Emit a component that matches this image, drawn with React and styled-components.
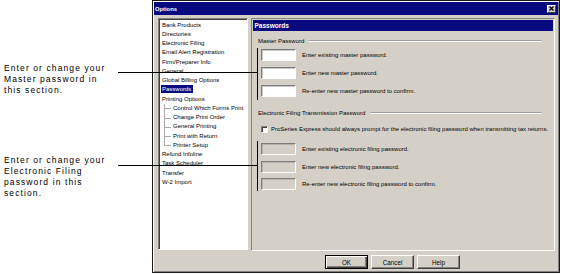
import React from "react";
import styled, { createGlobalStyle, css } from "styled-components";

const Global = createGlobalStyle`
  html, body { margin: 0; padding: 0; background: #fff; }
  body { overflow: hidden; }
  * { box-sizing: border-box; }
`;

const NAVY = "#0a0a80";
const FACE = "#d4d0c8";

const Page = styled.div`
  position: relative;
  width: 577px;
  height: 275px;
  display: flex;
  font-family: "Liberation Sans", Arial, sans-serif;
  color: #000;
`;

const NoteColumn = styled.div`
  width: 152px;
  flex: none;
  display: flex;
  flex-direction: column;
  padding-left: 4px;
`;

const Note = styled.p`
  margin: ${(p) => p.$top}px 0 0 0;
  font-size: 8.5px;
  line-height: 10.8px;
  letter-spacing: 1.1px;
  white-space: nowrap;
`;

const Leader = styled.div`
  position: absolute;
  left: 118px;
  top: ${(p) => p.$top}px;
  width: 140px;
  height: 1px;
  background: #000;
`;

const Bracket = styled.div`
  position: absolute;
  left: 257px;
  top: ${(p) => p.$top}px;
  width: 1px;
  height: ${(p) => p.$height}px;
  background: #000;
`;

const Dialog = styled.div`
  width: 408px;
  height: 273px;
  flex: none;
  border: 1px solid #1a1a1a;
  background: ${FACE};
  box-shadow: inset 1px 1px 0 #fff, inset -1px -1px 0 #808080;
  padding: 1px;
  display: flex;
  flex-direction: column;
`;

const TitleBar = styled.div`
  height: 13px;
  flex: none;
  background: ${NAVY};
  display: flex;
  align-items: center;
  justify-content: space-between;
  padding: 0 2px 0 1px;
  color: #fff;
  font-weight: bold;
  font-size: 5.8px;
`;

const CloseButton = styled.div`
  width: 9px;
  height: 8px;
  background: ${FACE};
  border: 1px solid;
  border-color: #fff #404040 #404040 #fff;
  display: flex;
  align-items: center;
  justify-content: center;
`;

const Body = styled.div`
  display: flex;
  gap: 3px;
  margin-top: 3px;
  padding-left: 4px;
`;

const Tree = styled.ul`
  list-style: none;
  margin: 0;
  width: 90px;
  height: 232px;
  flex: none;
  background: #fff;
  border: 1px solid;
  border-color: #808080 #fff #fff #808080;
  box-shadow: inset 1px 1px 0 #404040;
  padding: 1.5px 0 0 1px;
  font-size: 6px;
  line-height: 9.25px;
`;

const TreeItem = styled.li`
  position: relative;
  padding-left: ${(p) => (p.$child ? 13 : 2)}px;
  white-space: nowrap;
  ${(p) =>
    p.$child &&
    css`
      &::before {
        content: "";
        position: absolute;
        left: 3.5px;
        top: 0;
        height: ${p.$last ? "50%" : "100%"};
        border-left: 1px solid #a8a8a8;
      }
      &::after {
        content: "";
        position: absolute;
        left: 3.5px;
        top: 50%;
        width: 7px;
        border-top: 1px solid #a8a8a8;
      }
    `}
`;

const TreeLabel = styled.span`
  padding: 0.8px 1.5px;
  margin-left: -1.5px;
  ${(p) =>
    p.$selected &&
    css`
      background: ${NAVY};
      color: #fff;
    `}
`;

const Pane = styled.div`
  width: 304px;
  height: 233px;
  flex: none;
  border: 1px solid;
  border-color: #808080 #fff #fff #808080;
  padding: 1px;
  display: flex;
  flex-direction: column;
  font-size: 6px;
`;

const PaneHeader = styled.div`
  height: 11px;
  background: ${NAVY};
  color: #fff;
  font-weight: bold;
  font-size: 6.5px;
  display: flex;
  align-items: center;
  padding-left: 1.5px;
`;

const Section = styled.div`
  margin-top: ${(p) => p.$top}px;
  padding: 0 11px 0 5px;
  display: flex;
  flex-direction: column;
`;

const GroupHeading = styled.div`
  display: flex;
  align-items: center;
  height: 8px;
  gap: 5px;
  white-space: nowrap;
`;

const Etch = styled.div`
  flex: 1;
  height: 2px;
  border-top: 1px solid #a0a0a0;
  border-bottom: 1px solid #fff;
`;

const FieldList = styled.div`
  margin-top: ${(p) => p.$top}px;
  padding-left: 3px;
  display: flex;
  flex-direction: column;
  gap: ${(p) => p.$gap}px;
`;

const FieldRow = styled.div`
  display: flex;
  align-items: center;
  gap: 6px;
  height: 12px;
  white-space: nowrap;
`;

const Field = styled.div`
  width: 35px;
  height: 12px;
  flex: none;
  background: ${(p) => (p.$disabled ? FACE : "#fff")};
  border: 1px solid;
  border-color: #7c7c7c #fff #fff #7c7c7c;
  box-shadow: inset 1px 1px 0 ${(p) => (p.$disabled ? "#b8b4ac" : "#c8c8c8")};
`;

const CheckRow = styled.div`
  margin-top: 8px;
  padding-left: 3px;
  display: flex;
  align-items: center;
  gap: 3px;
  height: 8px;
  white-space: nowrap;
`;

const CheckBox = styled.div`
  width: 7px;
  height: 7px;
  flex: none;
  background: #fff;
  border: 1px solid;
  border-color: #808080 #fff #fff #808080;
  box-shadow: inset 1px 1px 0 #404040;
`;

const ButtonRow = styled.div`
  display: flex;
  gap: 3px;
  margin-top: 4px;
  padding-left: 171px;
`;

const Button = styled.button`
  width: 43px;
  height: 14px;
  padding: 0;
  font-family: "Liberation Sans", Arial, sans-serif;
  font-size: 6.3px;
  color: #000;
  background: ${FACE};
  border: 1px solid;
  border-color: #fff #404040 #404040 #fff;
  box-shadow: inset -1px -1px 0 #808080;
  ${(p) =>
    p.$default &&
    css`
      border-color: #000;
      box-shadow: inset 1px 1px 0 #fff, inset -1px -1px 0 #404040,
        inset -2px -2px 0 #808080;
    `}
`;

const treeItems = [
  { label: "Bank Products" },
  { label: "Directories" },
  { label: "Electronic Filing" },
  { label: "Email Alert Registration" },
  { label: "Firm/Preparer Info" },
  { label: "General" },
  { label: "Global Billing Options" },
  { label: "Passwords", selected: true },
  { label: "Printing Options" },
  { label: "Control Which Forms Print", child: true },
  { label: "Change Print Order", child: true },
  { label: "General Printing", child: true },
  { label: "Print with Return", child: true },
  { label: "Printer Setup", child: true, last: true },
  { label: "Refund Infoline" },
  { label: "Task Scheduler" },
  { label: "Transfer" },
  { label: "W-2 Import" },
];

const masterFields = [
  "Enter existing master password.",
  "Enter new master password.",
  "Re-enter new master password to confirm.",
];

const efFields = [
  "Enter existing electronic filing password.",
  "Enter new electronic filing password.",
  "Re-enter new electronic filing password to confirm.",
];

export default function App() {
  return (
    <>
      <Global />
      <Page>
        <NoteColumn>
          <Note $top={63}>
            Enter or change your
            <br />
            Master password in
            <br />
            this section.
          </Note>
          <Note $top={60}>
            Enter or change your
            <br />
            Electronic Filing
            <br />
            password in this
            <br />
            section.
          </Note>
        </NoteColumn>

        <Dialog>
          <TitleBar>
            <span>Options</span>
            <CloseButton>
              <svg width="5" height="5" viewBox="0 0 5 5">
                <path d="M0.5 0.5L4.5 4.5M4.5 0.5L0.5 4.5" stroke="#000" strokeWidth="1.3" />
              </svg>
            </CloseButton>
          </TitleBar>

          <Body>
            <Tree>
              {treeItems.map((it) => (
                <TreeItem key={it.label} $child={it.child} $last={it.last}>
                  <TreeLabel $selected={it.selected}>{it.label}</TreeLabel>
                </TreeItem>
              ))}
            </Tree>

            <Pane>
              <PaneHeader>Passwords</PaneHeader>
              <Section $top={6}>
                <GroupHeading>
                  <span>Master Password</span>
                  <Etch />
                </GroupHeading>
                <FieldList $top={4} $gap={6}>
                  {masterFields.map((t) => (
                    <FieldRow key={t}>
                      <Field />
                      <span>{t}</span>
                    </FieldRow>
                  ))}
                </FieldList>
              </Section>
              <Section $top={12}>
                <GroupHeading>
                  <span>Electronic Filing Transmission Password</span>
                  <Etch />
                </GroupHeading>
                <CheckRow>
                  <CheckBox />
                  <span>
                    ProSeries Express should always prompt for the electronic filing password when
                    transmitting tax returns.
                  </span>
                </CheckRow>
                <FieldList $top={10} $gap={5.5}>
                  {efFields.map((t) => (
                    <FieldRow key={t}>
                      <Field $disabled />
                      <span>{t}</span>
                    </FieldRow>
                  ))}
                </FieldList>
              </Section>
            </Pane>
          </Body>

          <ButtonRow>
            <Button $default>OK</Button>
            <Button>Cancel</Button>
            <Button>Help</Button>
          </ButtonRow>
        </Dialog>

        <Leader $top={72} />
        <Bracket $top={48} $height={52} />
        <Leader $top={165} />
        <Bracket $top={141} $height={50} />
      </Page>
    </>
  );
}
